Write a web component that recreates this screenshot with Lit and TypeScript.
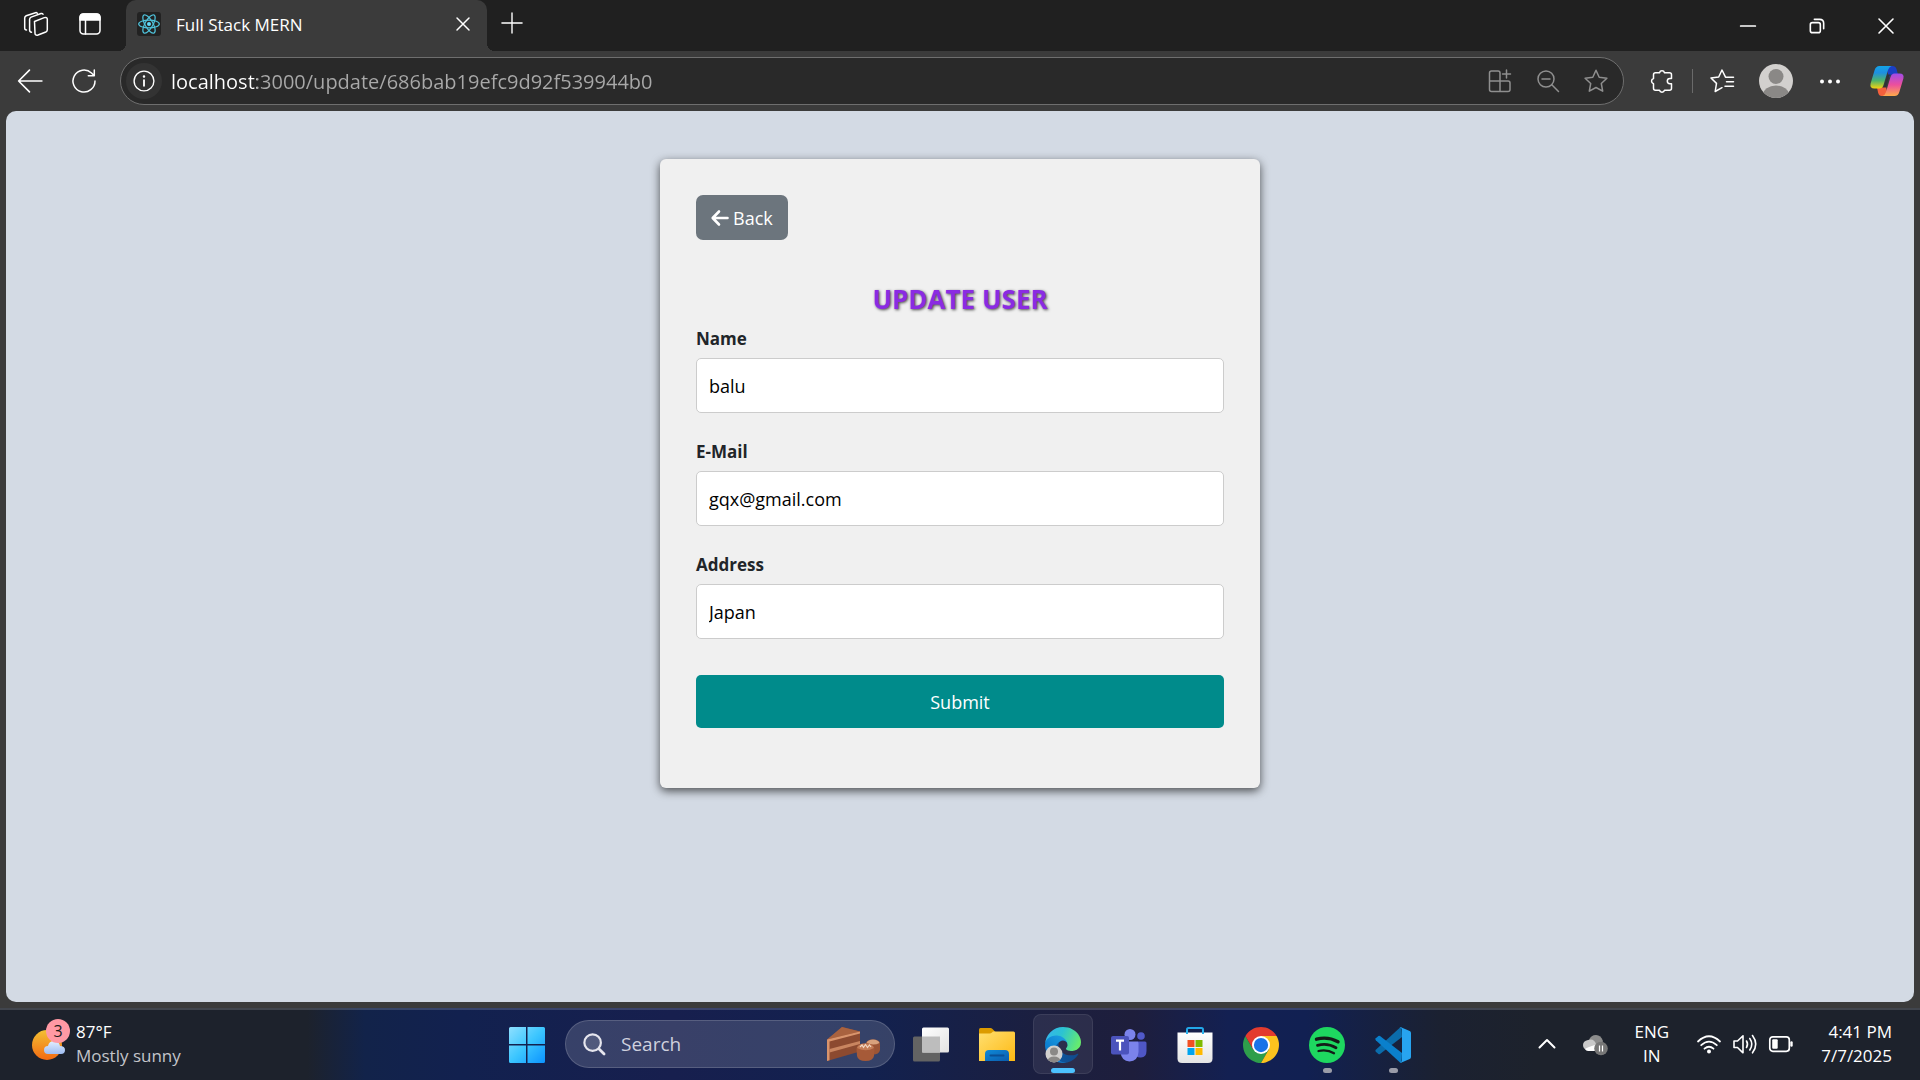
import { LitElement, html, css, svg, type TemplateResult } from "lit";
import { customElement, property } from "lit/decorators.js";

const base = css`
  *,
  *::before,
  *::after {
    box-sizing: border-box;
  }
  button,
  input {
    font: inherit;
    color: inherit;
    margin: 0;
    padding: 0;
    border: 0;
    background: none;
  }
  button {
    cursor: pointer;
    display: flex;
    align-items: center;
    justify-content: center;
  }
  svg {
    display: block;
    flex: none;
    overflow: visible;
  }
  .line {
    fill: none;
    stroke: currentColor;
    stroke-width: 1.5;
    stroke-linecap: round;
    stroke-linejoin: round;
  }
`;

const icon = (size: number, body: TemplateResult, cls = "line") => html`
  <svg class=${cls} width=${size} height=${size} viewBox="0 0 24 24" aria-hidden="true">${body}</svg>
`;

const logo = (size: number, body: TemplateResult, box = 36) => html`
  <svg width=${size} height=${size} viewBox="0 0 ${box} ${box}" aria-hidden="true">${body}</svg>
`;

/* ---------- Tab strip ---------- */

@customElement("tab-strip")
class TabStrip extends LitElement {
  static styles = [
    base,
    css`
      :host {
        display: flex;
        align-items: stretch;
        height: 51px;
        background: #202020;
        color: #fff;
      }
      .tools {
        display: flex;
        align-items: center;
        gap: 30px;
        padding: 0 24px 3px;
      }
      .tab {
        position: relative;
        display: flex;
        align-items: center;
        width: 361px;
        padding: 0 16px 3px 11px;
        border-radius: 10px 10px 0 0;
        background: #3b3b3b;
        font-size: 17px;
      }
      .tab::before,
      .tab::after {
        content: "";
        position: absolute;
        bottom: 0;
        width: 8px;
        height: 8px;
      }
      .tab::before {
        right: 100%;
        background: radial-gradient(circle at 0 0, transparent 8px, #3b3b3b 8px);
      }
      .tab::after {
        left: 100%;
        background: radial-gradient(circle at 100% 0, transparent 8px, #3b3b3b 8px);
      }
      .title {
        flex: 1;
        padding-left: 15px;
      }
      .new {
        padding: 0 15px 5px 14px;
      }
      .window {
        display: flex;
        margin-left: auto;
      }
      .window button {
        width: 69px;
      }
    `,
  ];

  render() {
    return html`
      <div class="tools">
        <button aria-label="Workspaces">
          ${icon(24, svg`
            <path d="M10.5 9.5 20.3 5.6q2.7-.8 3 1.6v10.600q0 1.500-1.500 2.200L14 23q-2.900.8-3-1.800z"/>
            <path d="M7.500 20.200Q5.600 20 5.600 18V7.300q0-1.500 1.500-2.200L17 1.500q1.500-.3 2 .8" />
            <path d="M2.500 18Q.7 18 .7 16V6q0-1.500 1.500-2.200L11.500.7q1-.3 1.800.5" />`)}
        </button>
        <button aria-label="Tab actions">
          ${icon(24, svg`
            <rect x="2" y="2" width="20" height="20" rx="3.500"/>
            <path d="M2 8V5.500Q2 2 5.500 2h13Q22 2 22 5.500V8z" fill="currentColor"/>
            <path d="M7.500 8v14"/>`)}
        </button>
      </div>
      <div class="tab">
        ${logo(24, svg`
          <rect width="24" height="24" rx="3" fill="#222"/>
          <g fill="none" stroke="#4fc3dc" stroke-width="1.200">
            <ellipse cx="12" cy="12" rx="10.300" ry="3.900"/>
            <ellipse cx="12" cy="12" rx="10.300" ry="3.900" transform="rotate(60 12 12)"/>
            <ellipse cx="12" cy="12" rx="10.300" ry="3.900" transform="rotate(120 12 12)"/>
          </g>
          <circle cx="12" cy="12" r="2" fill="#61dafb"/>`, 24)}
        <span class="title">Full Stack MERN</span>
        <button aria-label="Close tab">
          ${icon(16, svg`<path d="M3 3l18 18M21 3 3 21" stroke-width="2.200"/>`)}
        </button>
      </div>
      <button class="new" aria-label="New tab">
        ${icon(22, svg`<path d="M12 1v22M1 12h22"/>`)}
      </button>
      <div class="window">
        <button aria-label="Minimize">
          ${icon(16, svg`<path d="M1 12h22" stroke-width="2.600"/>`)}
        </button>
        <button aria-label="Restore">
          ${icon(16, svg`
            <rect x="2" y="7" width="15" height="15" rx="3" stroke-width="2.400"/>
            <path d="M8 2h8q6 0 6 6v8" stroke-width="2.400"/>`)}
        </button>
        <button aria-label="Close">
          ${icon(16, svg`<path d="M1.500 1.500l21 21M22.500 1.500l-21 21" stroke-width="2.400"/>`)}
        </button>
      </div>
    `;
  }
}

/* ---------- Address toolbar ---------- */

@customElement("address-toolbar")
class AddressToolbar extends LitElement {
  @property() url = "";

  static styles = [
    base,
    css`
      :host {
        display: flex;
        align-items: center;
        height: 60px;
        padding: 0 16px 0 17px;
        background: #3b3b3b;
        color: #fff;
      }
      .nav {
        display: flex;
        gap: 29px;
      }
      .bar {
        flex: 1;
        display: flex;
        align-items: center;
        height: 48px;
        margin: 0 26px 0 24px;
        padding: 0 15px 0 5px;
        border: 1px solid #6e6e6e;
        border-radius: 24px;
        background: #292929;
      }
      .info {
        width: 36px;
        height: 36px;
        border-radius: 50%;
        background: #333;
      }
      .url {
        flex: 1;
        min-width: 0;
        height: 36px;
        margin-left: 9px;
        font-size: 20px;
        color: #a9a9a9;
        caret-color: #fff;
        background: linear-gradient(90deg, #fff 86px, #a9a9a9 86px);
        -webkit-background-clip: text;
        background-clip: text;
        -webkit-text-fill-color: transparent;
        outline: none;
      }
      .inside {
        display: flex;
        gap: 24px;
        color: #8f8f8f;
      }
      .divider {
        width: 1px;
        height: 24px;
        margin: 0 17px 0 18px;
        background: #6a6a6a;
      }
      .more {
        display: flex;
        align-items: center;
        gap: 25px;
      }
      .copilot {
        margin-left: 3px;
      }
    `,
  ];

  render() {
    return html`
      <div class="nav">
        <button aria-label="Back">
          ${icon(26, svg`<path d="M23 12H1.500M11.500 2 1.500 12l10 10"/>`)}
        </button>
        <button aria-label="Refresh">
          ${icon(24, svg`<path d="M23 12A11 11 0 1 1 19.500 4L22.300 6.800M22.300 1v5.800h-6"/>`)}
        </button>
      </div>
      <div class="bar">
        <button class="info" aria-label="View site information">
          ${icon(22, svg`
            <circle cx="12" cy="12" r="10.800"/>
            <path d="M12 11v6.300" stroke-width="2"/>
            <circle cx="12" cy="7.200" r=".6" fill="currentColor"/>`)}
        </button>
        <input class="url" type="text" aria-label="Address and search bar" .value=${this.url} spellcheck="false" />
        <div class="inside">
          <button aria-label="App available">
            ${icon(24, svg`
              <path d="M12 22.500H3.500q-2 0-2-2V4q0-2 2-2H10q2 0 2 2v18.500h8q2 0 2-2V14q0-2-2-2H1.500M18.500 1v8M14.500 5h8"/>`)}
          </button>
          <button aria-label="Zoom out">
            ${icon(24, svg`<circle cx="10" cy="10" r="8"/><path d="M15.800 15.800l6.700 6.700M6 10h8"/>`)}
          </button>
          <button aria-label="Add to favorites">
            ${icon(24, svg`
              <path d="M12 1.200l3.200 7 7.700 1-5.600 5.300 1.400 7.700L12 18.500l-6.700 3.700 1.400-7.700L1.100 9.200l7.700-1z"/>`)}
          </button>
        </div>
      </div>
      <button aria-label="Extensions">
        ${icon(24, svg`
          <path d="M5.500 3.700h4a2.600 2.600 0 0 1 5 0h5q2 0 2 2v3.800h-1.600a2.600 2.600 0 0 0 0 5.200h1.600v4.600q0 2-2 2h-5a2.600 2.600 0 0 1-5 0h-4q-2 0-2-2v-4.600a2.700 2.700 0 0 1 0-5.200V5.700q0-2 2-2z"/>`)}
      </button>
      <span class="divider"></span>
      <div class="more">
        <button aria-label="Favorites">
          ${icon(24, svg`
            <path d="M23.500 8.200h-8L12 1 8.700 8 1 9l5.500 5.400L5.200 22.500 12 18.700M16.500 12.700h7M15 17.200h8.500"/>`)}
        </button>
        <button aria-label="Profile">
          ${logo(34, svg`
            <defs><clipPath id="av"><circle cx="17" cy="17" r="17"/></clipPath></defs>
            <circle cx="17" cy="17" r="17" fill="#d2d0ce"/>
            <g fill="#8a8886" clip-path="url(#av)">
              <circle cx="17" cy="12.500" r="7.500"/><ellipse cx="17" cy="31" rx="13" ry="9.500"/>
            </g>`, 34)}
        </button>
        <button aria-label="Settings and more">
          ${icon(24, svg`
            <g fill="currentColor" stroke="none">
              <circle cx="4" cy="12.500" r="2"/><circle cx="12" cy="12.500" r="2"/><circle cx="20" cy="12.500" r="2"/>
            </g>`)}
        </button>
        <button class="copilot" aria-label="Copilot">
          ${logo(34, svg`
            <defs>
              <linearGradient id="c1" x1="0" y1="0" x2="0" y2="1">
                <stop offset="0" stop-color="#14a4e8"/><stop offset=".3" stop-color="#1e8fe0"/>
                <stop offset=".65" stop-color="#4fb46a"/><stop offset="1" stop-color="#f5d30f"/>
              </linearGradient>
              <linearGradient id="c2" x1="0" y1="0" x2="0" y2="1">
                <stop offset="0" stop-color="#a04be8"/><stop offset=".5" stop-color="#ec4f9d"/>
                <stop offset="1" stop-color="#ffab4a"/>
              </linearGradient>
            </defs>
            <path d="M16 2h6.500q3 0 4 3l1.500 5.500h-5q-3 0-4 3z" fill="#1b3fc4"/>
            <path d="M18 32h-6.500q-2.500 0-3.300-3L7 23.500h5q2.500 0 3.500-3z" fill="#f4603c"/>
            <path d="M9.500 2H21.500q-2.500.8-3.500 4l-4.500 15q-1 3.500-4 3.500H4.500Q-.5 24.500.6 19.500L4.500 6.500q1.200-4.500 5-4.500z" fill="url(#c1)"/>
            <path d="M24.500 32H12.500q2.500-.8 3.500-4l4.500-15q1-3.500 4-3.500h5q5 0 3.900 5L29.500 27.500q-1.200 4.500-5 4.500z" fill="url(#c2)"/>
            <path d="M17.300 10.500h3.500q-1.500 1-2 3L16 23.500h-3.200q1.200-1 1.700-3z" fill="#2e3238"/>`, 34)}
        </button>
      </div>
    `;
  }
}

/* ---------- Update form ---------- */

interface Field {
  id: string;
  label: string;
  type: string;
  value: string;
}

@customElement("update-user")
class UpdateUser extends LitElement {
  static styles = [
    base,
    css`
      :host {
        display: block;
        width: 600px;
        max-width: 100%;
        padding: 36px 36px 60px;
        border-radius: 6px;
        background: #f0f0f0;
        box-shadow: 0 3px 10px rgba(0, 0, 0, 0.65);
        color: #212529;
      }
      .back {
        display: inline-flex;
        align-items: center;
        gap: 4px;
        height: 45px;
        padding: 0 15px;
        border-radius: 7px;
        background: #6c757d;
        color: #fff;
        font-size: 18px;
        text-decoration: none;
        vertical-align: top;
      }
      h3 {
        margin: 41px 0 7px;
        font-size: 26px;
        line-height: 36px;
        font-weight: 700;
        text-align: center;
        color: #8a2be2;
        text-shadow: 1px 1px 3px rgba(0, 0, 0, 0.7);
      }
      form {
        display: flex;
        flex-direction: column;
      }
      .field {
        display: flex;
        flex-direction: column;
        margin-bottom: 24px;
      }
      label {
        font-size: 17px;
        line-height: 29px;
        font-weight: 700;
        margin-bottom: 5px;
      }
      .field input {
        height: 55px;
        padding: 0 12px;
        border: 1px solid #ccc;
        border-radius: 5px;
        background: #fff;
        color: #000;
        font-size: 18px;
      }
      .submit {
        height: 53px;
        margin-top: 12px;
        border-radius: 5px;
        background: #008b8b;
        color: #fff;
        font-size: 18px;
      }
    `,
  ];

  private fields: Field[] = [
    { id: "name", label: "Name", type: "text", value: "balu" },
    { id: "email", label: "E-Mail", type: "email", value: "gqx@gmail.com" },
    { id: "address", label: "Address", type: "text", value: "Japan" },
  ];

  render() {
    return html`
      <a class="back" href="/">
        ${logo(18, svg`
          <path d="M16.500 9H2M8 2.500 1.700 9 8 15.500" fill="none" stroke="#fff" stroke-width="2.600"
            stroke-linecap="round" stroke-linejoin="round"/>`, 18)}
        Back
      </a>
      <h3>UPDATE USER</h3>
      <form @submit=${(e: Event) => e.preventDefault()}>
        ${this.fields.map(
          (f) => html`
            <div class="field">
              <label for=${f.id}>${f.label}</label>
              <input id=${f.id} name=${f.id} type=${f.type} .value=${f.value} autocomplete="off" />
            </div>
          `,
        )}
        <button class="submit" type="submit">Submit</button>
      </form>
    `;
  }
}

/* ---------- Taskbar ---------- */

const startLogo = logo(36, svg`
  <defs>
    <linearGradient id="st" x1="0" y1="0" x2="1" y2="1">
      <stop offset="0" stop-color="#8fe0ff"/><stop offset=".5" stop-color="#3cc6ff"/>
      <stop offset="1" stop-color="#0b93ff"/>
    </linearGradient>
  </defs>
  <path d="M1.500 0H17v17H0V1.500Q0 0 1.500 0zM18.500 0h16Q36 0 36 1.500V17H18.500zM0 18.500h17V36H1.500Q0 36 0 34.500zM18.500 18.500H36v16q0 1.500-1.500 1.500h-16z" fill="url(#st)"/>`);

const taskViewLogo = logo(36, svg`
  <defs>
    <linearGradient id="tv" x1="0" y1="0" x2="1" y2="1">
      <stop offset="0" stop-color="#fff"/><stop offset="1" stop-color="#e2e2e2"/>
    </linearGradient>
  </defs>
  <rect y="9.500" width="27" height="25" rx="1.500" fill="#636363"/>
  <rect x="9" y=".5" width="27" height="25" rx="1.500" fill="url(#tv)"/>
  <rect x="9" y="9.500" width="18" height="16" fill="#bdbdbd"/>`);

const explorerLogo = logo(36, svg`
  <defs>
    <linearGradient id="ex" x1="0" y1="0" x2="1" y2="1">
      <stop offset="0" stop-color="#ffdf70"/><stop offset="1" stop-color="#fdb913"/>
    </linearGradient>
    <linearGradient id="eb" x1="0" y1="0" x2="1" y2="1">
      <stop offset="0" stop-color="#0f8ad8"/><stop offset="1" stop-color="#0a5cad"/>
    </linearGradient>
  </defs>
  <path d="M0 2.500Q0 1 1.500 1h10q1 0 2 1l3 3v4H0z" fill="#dc9b00"/>
  <path d="M0 6.500h10.500q1.500 0 2.500-1l1-1h20.500Q36 4.500 36 6v28H0z" fill="url(#ex)"/>
  <path d="M6 34V27q0-4 4-4h16q4 0 4 4v7z" fill="url(#eb)"/>
  <path d="M11.500 28.500h13" stroke="#0a4f94" stroke-width="2" stroke-linecap="round"/>`);

const edgeLogo = logo(36, svg`
  <defs>
    <linearGradient id="ed" x1="0" y1=".5" x2="1" y2=".7">
      <stop offset="0" stop-color="#0c59a4"/><stop offset="1" stop-color="#114a8b"/>
    </linearGradient>
    <linearGradient id="em" x1=".8" y1=".1" x2=".2" y2="1">
      <stop offset="0" stop-color="#1b9de2"/><stop offset=".6" stop-color="#0c7fd0"/>
      <stop offset="1" stop-color="#0f78d4"/>
    </linearGradient>
    <linearGradient id="eg" x1="0" y1=".2" x2="1" y2=".5">
      <stop offset="0" stop-color="#35b4ee"/><stop offset=".45" stop-color="#2cc3d2"/>
      <stop offset="1" stop-color="#66eb6e"/>
    </linearGradient>
  </defs>
  <g transform="scale(.1406)">
    <path fill="url(#ed)" d="M231 190.500c-3.400 1.800-6.900 3.400-10.500 4.700a101.500 101.500 0 0 1-35.900 6.500c-47.300 0-88.500-32.500-88.500-74.300 0-11.400 6.400-21.900 16.400-27.300-42.800 1.800-53.800 46.400-53.800 72.500 0 74 68.100 81.400 82.800 81.400 7.900 0 19.800-2.300 27-4.600l1.300-.4a128.300 128.300 0 0 0 66.600-52.800 4 4 0 0 0-5.400-5.700z"/>
    <path fill="url(#em)" d="M105.700 241.400a79.200 79.200 0 0 1-22.700-21.400 80.700 80.700 0 0 1 29.500-120c3.200-1.500 8.500-4.100 15.600-4a32.400 32.400 0 0 1 25.700 13 31.900 31.900 0 0 1 6.300 18.700c0-.2 24.500-79.600-80-79.600-43.900 0-80 41.600-80 78.200 0 19.400 4.200 38.700 12.200 56.200a128 128 0 0 0 156.400 67 75.500 75.500 0 0 1-62.900-8z"/>
    <path fill="url(#eg)" d="M152.300 148.900c-.8 1-3.300 2.500-3.300 5.700 0 2.600 1.700 5.100 4.700 7.200 14.400 10 41.500 8.700 41.600 8.700 10.700 0 21.100-2.900 30.300-8.300a61.400 61.400 0 0 0 30.400-52.900c.3-22.400-8-37.300-11.300-43.900C223.400 23.900 177.700 0 128 0A128 128 0 0 0 0 126.200c.5-36.500 36.800-66 80-66 3.500 0 23.500.3 42 10.100 16.300 8.600 24.900 18.900 30.800 29.200 6.200 10.600 7.300 24.100 7.300 29.500 0 5.400-2.700 13.300-7.800 19.900z"/>
  </g>
  <defs><clipPath id="ea"><circle cx="9" cy="27" r="8.500"/></clipPath></defs>
  <circle cx="9" cy="27" r="8.500" fill="#d2d0ce"/>
  <g fill="#8a8886" clip-path="url(#ea)">
    <circle cx="9" cy="24.500" r="4"/><ellipse cx="9" cy="34" rx="6.500" ry="4.500"/>
  </g>`);

const teamsLogo = logo(36, svg`
  <circle cx="30" cy="9" r="3.800" fill="#5059c9"/>
  <path d="M26 14.500h8q1.500 0 1.500 1.500v8q0 6-5.500 6.500-3 .3-5-1.500z" fill="#4f57c6"/>
  <circle cx="19" cy="7.500" r="5.500" fill="#7b83eb"/>
  <path d="M12 14.500h14q1.500 0 1.500 1.500v9q-.5 9-9 9.500-8-.5-9-9z" fill="#7b83eb"/>
  <rect y="9" width="18" height="18.500" rx="2" fill="#4b53bc"/>
  <path d="M5 13.700h8M9 13.700v9.800" stroke="#fff" stroke-width="2.200" fill="none"/>`);

const storeLogo = logo(36, svg`
  <defs>
    <linearGradient id="sb" x1="0" y1="0" x2="0" y2="1">
      <stop offset="0" stop-color="#fff"/><stop offset="1" stop-color="#e4e4e4"/>
    </linearGradient>
  </defs>
  <path d="M10 6V2.500Q10 1 11.500 1h13Q26 1 26 2.500V6" fill="none" stroke="#22a7e8" stroke-width="2"/>
  <path d="M.5 5.500h35v26q0 4.500-4.500 4.500H5Q.5 36 .5 31.500z" fill="url(#sb)"/>
  <path d="M10 3v4M26 3v4" stroke="#2bb3ee" stroke-width="2"/>
  <path d="M10.500 13h7v7h-7z" fill="#f25022"/><path d="M18.500 13h7v7h-7z" fill="#7fba00"/>
  <path d="M10.500 21h7v7h-7z" fill="#00a4ef"/><path d="M18.500 21h7v7h-7z" fill="#ffb900"/>`);

const chromeLogo = logo(36, svg`
  <path d="M3.220 12A24 24 0 0 0 24 48L34.390 30 24 24 13.600 30z" fill="#2e9e4b"/>
  <path d="M24 48A24 24 0 0 0 44.780 12H24v12l10.390 6z" fill="#fcc31e"/>
  <path d="M3.220 12A24 24 0 0 1 44.780 12H24v12l-10.400 6z" fill="#e33b2e"/>
  <circle cx="24" cy="24" r="12" fill="#fff"/><circle cx="24" cy="24" r="9.500" fill="#1a73e8"/>`, 48);

const spotifyLogo = logo(36, svg`
  <circle cx="18" cy="18" r="18" fill="#1ed760"/>
  <g fill="none" stroke="#141a18" stroke-linecap="round">
    <path d="M7.500 12.200q11.500-3 21.500 2.600" stroke-width="3.400"/>
    <path d="M8.500 18.300q10-2.700 18.500 2.400" stroke-width="2.800"/>
    <path d="M9.500 24q8.500-2 15.500 2.200" stroke-width="2.300"/>
  </g>`);

const codeLogo = logo(36, svg`
  <path d="M26.500.5 27 10 5 27q-.8.600-1.600 0L.8 24.800q-1-1 0-2L24.500.9q1-.9 2-.4z" fill="#0b6cab"/>
  <path d="M26.500 35.500 27 26 5 9q-.8-.6-1.600 0L.8 11.200q-1 1 0 2L24.500 35.100q1 .9 2 .4z" fill="#0a80cc"/>
  <path d="M26.500.4 34.700 4Q36 4.600 36 6v24q0 1.400-1.300 2l-8.200 3.600q-1 .4-2-.5 2 1 2.500-1.500V2.500Q26.500 0 24.500.9q1-.9 2-.5z" fill="#27a4f0"/>`);

const cakeArt = html`
  <svg width="54" height="34" viewBox="0 0 54 34" aria-hidden="true">
    <path d="M0 13 15 0l18 4.500v20L0 34z" fill="#8c4a30"/>
    <path d="M0 12.500 15 0l18 4.500z" fill="#a9623f"/>
    <path d="M0 12.500 33 4.500v2L2.500 14.500v18.700L0 34z" fill="#d9946c"/>
    <path d="M2.500 22 33 14v3L2.500 25.500z" fill="#c98560"/>
    <path d="M39 17q0-4.500 7-4.500t7 4.500v6q-1 4.500-7 4.500t-7-4.500z" fill="#9c5535"/>
    <path d="M39.500 16q1.500-3.500 6.500-3.500t6.500 3.500q-6 3-13 0z" fill="#d9a27c"/>
    <path d="M29.500 22q0-5.500 9-5.500t9 5.500l-.5 7q-1 5-8.500 5T30 29z" fill="#a65a38"/>
    <path d="M30 21q1.500-4.500 8.500-4.500T47 21q-8 4.500-17 0z" fill="#c47d57"/>
    <path d="M33 20l2-2 1.500 2.500 2-3 2 3 2-2.500 1.500 2" fill="none" stroke="#f3d9c4" stroke-width="1.200"/>
  </svg>
`;

@customElement("task-bar")
class TaskBar extends LitElement {
  static styles = [
    base,
    css`
      :host {
        display: grid;
        grid-template-columns: 1fr auto 1fr;
        align-items: center;
        height: 72px;
        border-top: 2px solid rgba(255, 255, 255, 0.16);
        background: linear-gradient(
            90deg,
            #1d222c 16%,
            #12234a 19%,
            #12214f 24%,
            #171f4e 35%,
            #12214f 45%,
            #1b1f40 54%,
            #1e1e3c 59%,
            #132052 64%,
            #112052 68%,
            #1b2131 75%,
            #1d222c 80%
          )
          border-box;
        color: #fff;
        font-size: 17px;
        line-height: 24px;
      }
      .weather {
        justify-self: start;
        display: flex;
        align-items: center;
        gap: 6px;
        padding-left: 32px;
        padding-bottom: 2px;
        text-align: left;
      }
      .stack {
        display: flex;
        flex-direction: column;
      }
      .soft {
        color: #c3c5ca;
      }
      .apps {
        display: flex;
        align-items: center;
      }
      .app {
        position: relative;
        width: 66px;
        height: 70px;
      }
      .app.active::before {
        content: "";
        position: absolute;
        inset: 4px 3px 6px;
        border: 1px solid rgba(255, 255, 255, 0.08);
        border-radius: 8px;
        background: rgba(255, 255, 255, 0.07);
      }
      .app svg {
        position: relative;
      }
      .app.open::after {
        content: "";
        position: absolute;
        bottom: 7px;
        left: 50%;
        width: 9px;
        height: 5px;
        margin-left: -4px;
        border-radius: 3px;
        background: #9a9ca8;
      }
      .app.active::after {
        width: 24px;
        margin-left: -12px;
        background: #4cc2ff;
      }
      .search {
        display: flex;
        align-items: center;
        width: 330px;
        height: 48px;
        margin: 0 3px 2px 5px;
        padding: 0 13px 0 17px;
        border: 1px solid rgba(255, 255, 255, 0.16);
        border-radius: 24px;
        background: rgba(255, 255, 255, 0.15);
        color: #e6e6ee;
      }
      .search input {
        flex: 1;
        min-width: 0;
        margin-left: 16px;
        font-size: 19px;
        outline: none;
      }
      .search input::placeholder {
        color: #cfd1de;
        opacity: 1;
      }
      .tray {
        justify-self: end;
        display: flex;
        align-items: center;
        padding: 0 28px 2px 0;
      }
      .cloud {
        margin-left: 24px;
      }
      .lang {
        margin: 0 28px;
        text-align: center;
      }
      .status {
        display: flex;
        gap: 12px;
      }
      .clock {
        margin-left: 28px;
        align-items: flex-end;
      }
      .badge {
        font-size: 16px;
      }
    `,
  ];

  private app(name: string, art: TemplateResult, state = "") {
    return html`<button class="app ${state}" aria-label=${name}>${art}</button>`;
  }

  render() {
    return html`
      <button class="weather">
        <svg width="38" height="48" viewBox="0 0 38 48" aria-hidden="true">
          <defs>
            <linearGradient id="sun" x1="0" y1="0" x2="0" y2="1">
              <stop offset="0" stop-color="#f3c033"/><stop offset="1" stop-color="#f26a12"/>
            </linearGradient>
            <linearGradient id="cl" x1="0" y1="0" x2="0" y2="1">
              <stop offset="0" stop-color="#e4efff"/><stop offset="1" stop-color="#9ebdf2"/>
            </linearGradient>
          </defs>
          <circle cx="15" cy="25" r="15" fill="url(#sun)"/>
          <path d="M16 34q-4 0-4-4t4-4q1-5 6-5t6 5q5 0 5 4t-4 4z" fill="url(#cl)"/>
          <circle cx="26" cy="11" r="12" fill="#ff99a4"/>
          <text class="badge" x="26" y="17" text-anchor="middle" fill="#1a1a1a">3</text>
        </svg>
        <span class="stack"><span>87°F</span><span class="soft">Mostly sunny</span></span>
      </button>
      <div class="apps">
        ${this.app("Start", startLogo)}
        <div class="search">
          ${icon(22, svg`
            <circle cx="10.500" cy="10.500" r="9" stroke-width="2.400" fill="#ffffff22"/>
            <path d="M17.500 17.500l5.500 5.500" stroke-width="3"/>`)}
          <input type="search" aria-label="Search" placeholder="Search" />
          ${cakeArt}
        </div>
        ${this.app("Task view", taskViewLogo)}
        ${this.app("File Explorer", explorerLogo)}
        ${this.app("Microsoft Edge", edgeLogo, "open active")}
        ${this.app("Microsoft Teams", teamsLogo)}
        ${this.app("Microsoft Store", storeLogo)}
        ${this.app("Google Chrome", chromeLogo)}
        ${this.app("Spotify", spotifyLogo, "open")}
        ${this.app("Visual Studio Code", codeLogo, "open")}
      </div>
      <div class="tray">
        <button aria-label="Show hidden icons">
          ${icon(24, svg`<path d="M4.500 15.500 12 8l7.500 7.500" stroke-width="2"/>`)}
        </button>
        <button class="cloud" aria-label="OneDrive">
          ${logo(24, svg`
            <path d="M6 8q2-5 7-5t7 6l-2 5H8z" fill="#8c8c8c"/>
            <path d="M4 18q-4-1-4-5t5-5q6-2 8 4l-2 6z" fill="#c9c9c9"/>
            <path d="M2 17q3-2 10-4l4 5q-2 1-4 1H5q-2 0-3-2z" fill="#fff"/>
            <circle cx="18" cy="16.500" r="6.800" fill="#777"/>
            <path d="M16.500 13.500v6M19.500 13.500v6" stroke="#fff" stroke-width="1.200"/>`, 24)}
        </button>
        <button class="lang stack"><span>ENG</span><span>IN</span></button>
        <button class="status" aria-label="Network, volume and battery">
          ${icon(24, svg`
            <path d="M1 9.500q11-10.500 22 0M4.200 13.200q7.800-7.200 15.600 0M7.500 16.700q4.500-4 9 0" stroke-width="1.800"/>
            <circle cx="12" cy="19.500" r="2" fill="currentColor" stroke="none"/>`)}
          ${icon(24, svg`
            <path d="M1 9h3.500L10 3.800v17L4.500 15.500H1zM13.500 9q2 3.300 0 6.500M16.800 6.500q4 5.700 0 11.500M19.500 3.500q6.500 8.700 0 17.300" stroke-width="1.600"/>`)}
          ${icon(24, svg`
            <rect x=".8" y="4.800" width="19.500" height="14.500" rx="3" stroke-width="1.700"/>
            <rect x="3.200" y="7.300" width="5.500" height="9.500" rx="1" fill="currentColor" stroke="none"/>
            <path d="M22.500 10.500v3" stroke-width="2.400"/>`)}
        </button>
        <button class="clock stack"><span>4:41 PM</span><span>7/7/2025</span></button>
      </div>
    `;
  }
}

/* ---------- Desktop ---------- */

@customElement("app-root")
class AppRoot extends LitElement {
  static styles = [
    base,
    css`
      :host {
        display: grid;
        grid-template-rows: auto auto 1fr auto;
        min-height: 100vh;
        background: #3b3b3b;
        font-family: "Segoe UI", "Open Sans", "Noto Sans", sans-serif;
      }
      main {
        display: flex;
        justify-content: center;
        align-items: flex-start;
        margin: 0 6px 6px;
        padding: 48px 24px;
        border-radius: 10px;
        background: #d3dae4;
      }
    `,
  ];

  render() {
    return html`
      <tab-strip></tab-strip>
      <address-toolbar url="localhost:3000/update/686bab19efc9d92f539944b0"></address-toolbar>
      <main><update-user></update-user></main>
      <task-bar></task-bar>
    `;
  }
}
